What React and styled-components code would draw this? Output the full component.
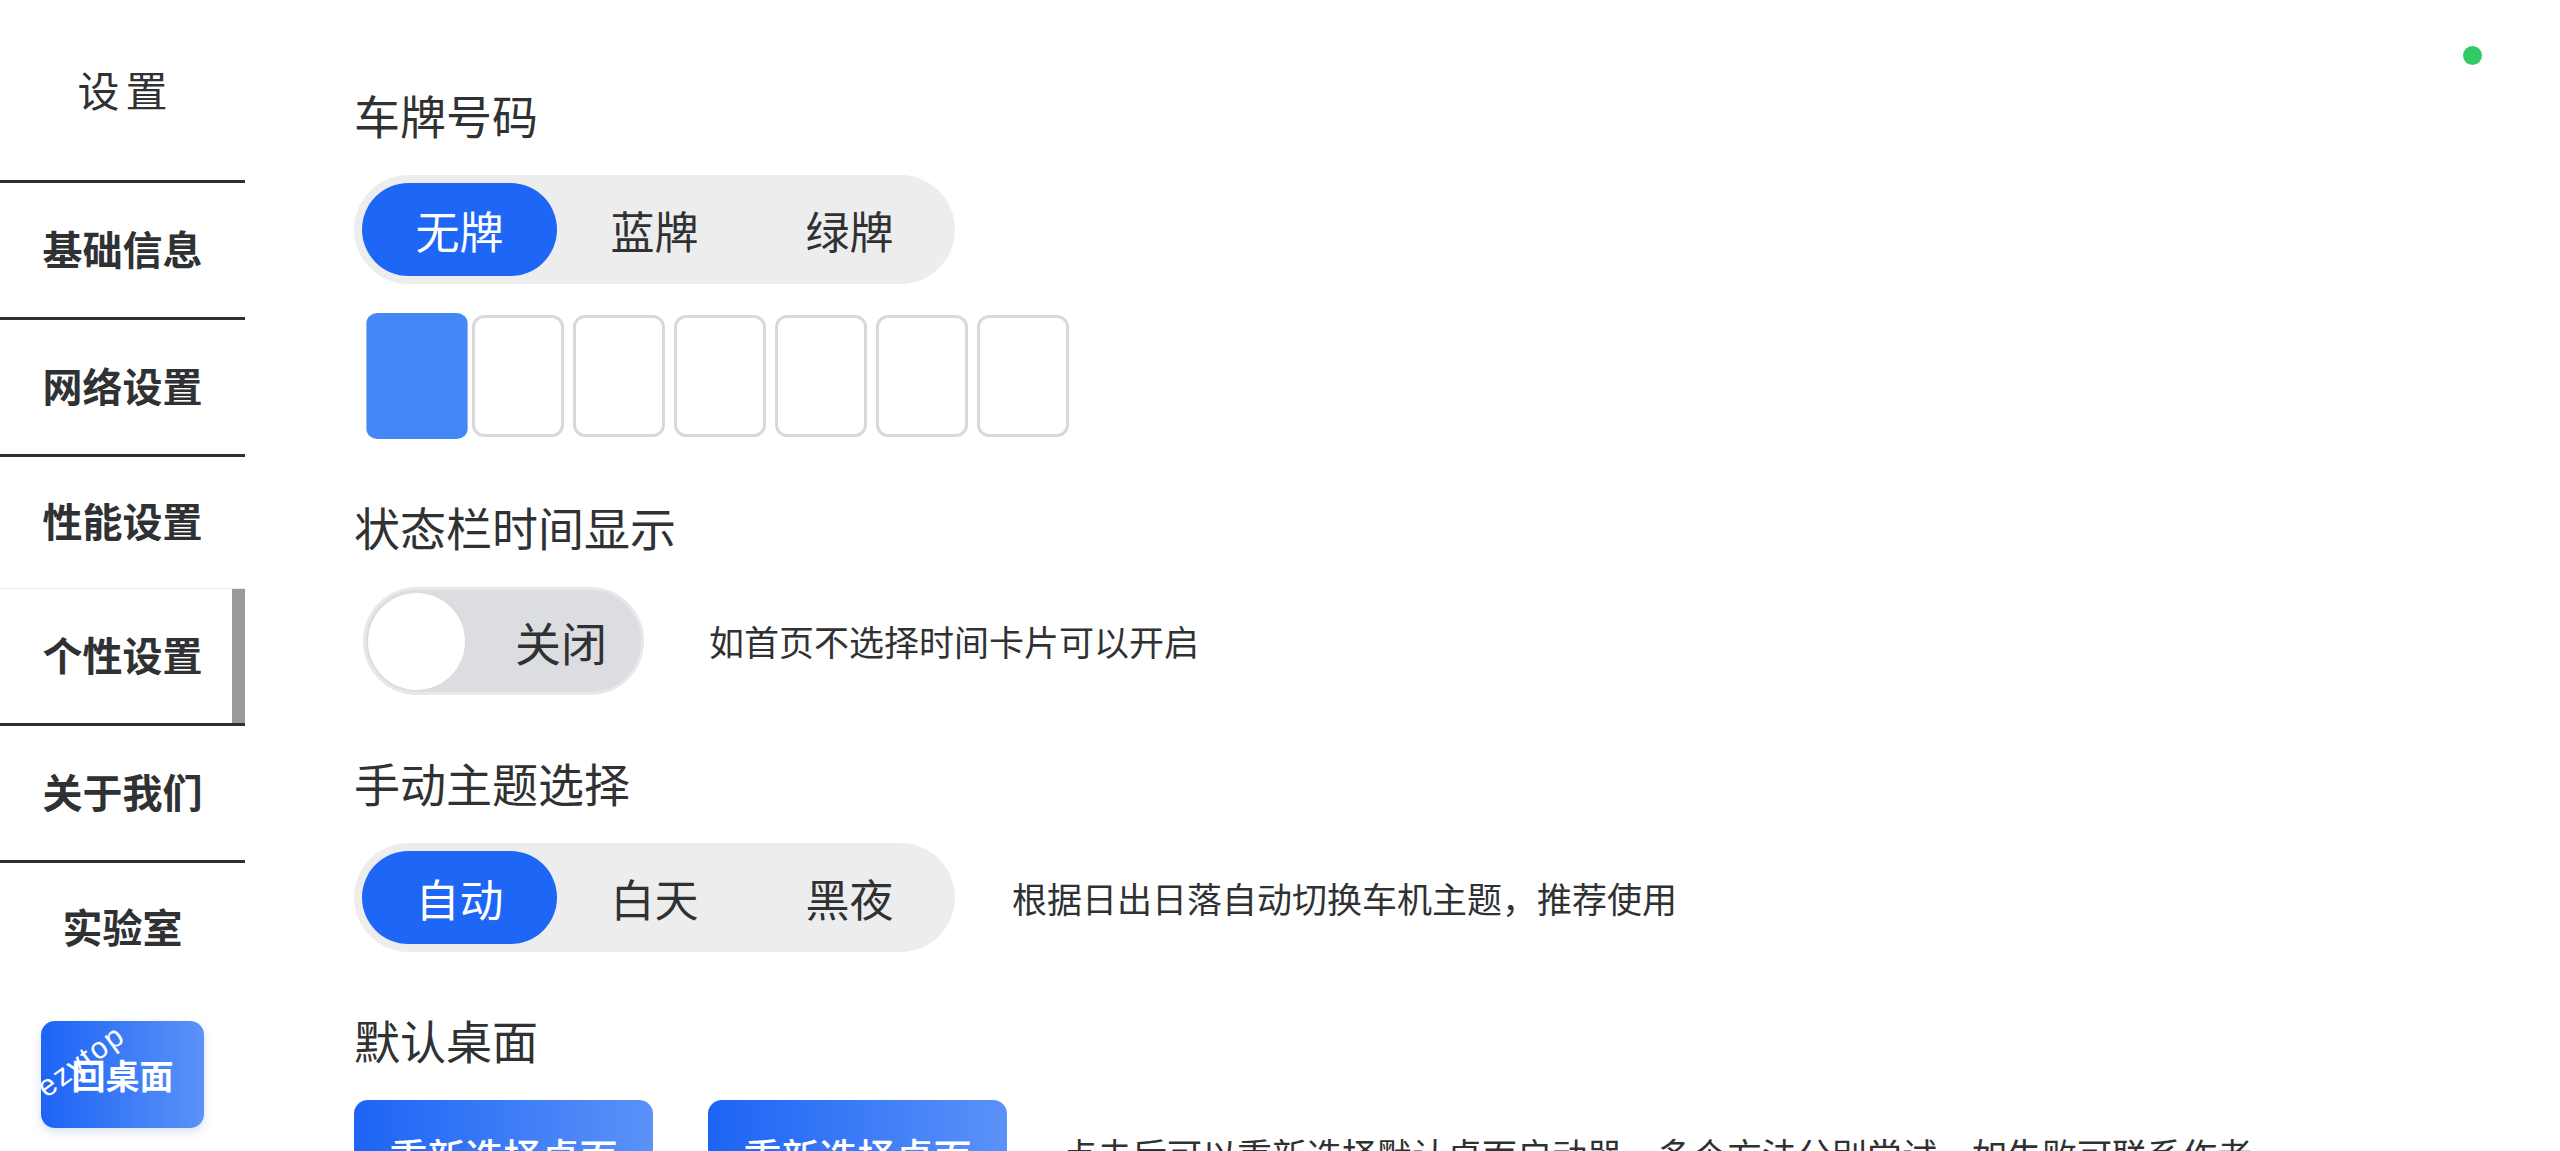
import React from 'react';
import styled, { createGlobalStyle, css } from 'styled-components';

const GlobalStyle = createGlobalStyle`
  html, body {
    margin: 0;
    padding: 0;
    background: #ffffff;
  }
  body {
    font-family: "Noto Sans CJK SC", "Noto Sans", "Liberation Sans", sans-serif;
    color: #303133;
    overflow: hidden;
  }
  * {
    box-sizing: border-box;
  }
`;

const blueGradient = css`
  background: linear-gradient(90deg, #1d64f5 0%, #5a92f8 100%);
`;

const Page = styled.div`
  position: relative;
  display: flex;
  width: 2560px;
  height: 1151px;
  overflow: hidden;
  background: #fff;
`;

const StatusDot = styled.span`
  position: absolute;
  top: 46px;
  right: 78px;
  width: 19px;
  height: 19px;
  border-radius: 50%;
  background: #33c966;
`;

// Sidebar
const Sidebar = styled.nav`
  width: 245px;
  flex-shrink: 0;
  display: flex;
  flex-direction: column;
  align-items: stretch;
`;

const SideTitle = styled.div`
  height: 183px;
  display: flex;
  align-items: center;
  justify-content: center;
  padding-left: 6px;
  padding-bottom: 4px;
  font-size: 42px;
  letter-spacing: 6px;
  color: #303133;
  border-bottom: 3px solid #2f3033;
`;

const NavItem = styled.div`
  height: ${(p) => (p.$divider ? 137 : 131)}px;
  display: flex;
  align-items: center;
  justify-content: center;
  padding-bottom: 5px;
  font-size: 40px;
  font-weight: 700;
  color: #303133;
  border-bottom: ${(p) => (p.$divider ? '3px solid #2f3033' : '0')};

  ${(p) =>
    p.$active &&
    css`
      height: 138px;
      border-top: 1px solid #ececec;
      box-shadow: inset -13px 0 0 #999999;
    `}
`;

const BackButton = styled.div`
  position: relative;
  align-self: center;
  margin-top: 27px;
  width: 163px;
  height: 107px;
  border-radius: 14px;
  ${blueGradient};
  box-shadow: 0 4px 10px rgba(40, 90, 200, 0.18);
  display: flex;
  align-items: center;
  justify-content: center;
  color: #fff;
  font-size: 34px;
  font-weight: 700;
  overflow: hidden;
`;

const Watermark = styled.span`
  position: absolute;
  left: 40px;
  top: 40px;
  transform: translate(-50%, -50%) rotate(-36deg);
  font-family: "Liberation Sans", sans-serif;
  font-size: 30px;
  letter-spacing: 2px;
  font-weight: 400;
  line-height: 1;
  color: #ffffff;
  white-space: nowrap;
`;

// Main content
const Main = styled.main`
  flex: 1;
  display: flex;
  flex-direction: column;
  gap: 63px;
  padding: 90px 0 0 109px;
`;

const Section = styled.section`
  display: flex;
  flex-direction: column;
  align-items: flex-start;
  gap: 29px;
`;

const Title = styled.h2`
  margin: 0;
  height: 56px;
  line-height: 48px;
  font-size: 46px;
  font-weight: 400;
  color: #303133;
`;

const Row = styled.div`
  display: flex;
  align-items: center;
  gap: ${(p) => p.$gap || 57}px;
`;

const Hint = styled.span`
  font-size: 35px;
  line-height: 1.2;
  color: #303133;
  white-space: nowrap;
`;

const SegmentGroup = styled.div`
  display: flex;
  height: 109px;
  padding: 8px;
  border-radius: 55px;
  background: #ededed;
`;

const Segment = styled.div`
  width: 195px;
  height: 93px;
  border-radius: 47px;
  display: flex;
  align-items: center;
  justify-content: center;
  font-size: 44px;
  color: ${(p) => (p.$active ? '#ffffff' : '#303133')};
  background: ${(p) => (p.$active ? '#1e66f6' : 'transparent')};
`;

const PlateRow = styled.div`
  display: flex;
  align-items: center;
  gap: 9px;
  height: 126px;
  padding-left: 17px;
`;

const PlateBox = styled.div`
  width: 92px;
  height: 122px;
  border-radius: 12px;
  border: 3px solid #d9d9d9;
  background: #fff;

  ${(p) =>
    p.$active &&
    css`
      border-color: #4388f6;
      background: #4388f6;
      border-radius: 10px;
      transform: scale(1.1, 1.033);
    `}
`;

const Toggle = styled.div`
  display: flex;
  align-items: center;
  width: 281px;
  height: 108px;
  padding: 0 2px;
  margin-left: 9px;
  border-radius: 54px;
  border: 3px solid #e8e8ea;
  background: #dcdde1;
`;

const Knob = styled.span`
  width: 97px;
  height: 97px;
  border-radius: 50%;
  background: #ffffff;
`;

const ToggleLabel = styled.span`
  margin-left: auto;
  margin-right: 32px;
  font-size: 46px;
  color: #303133;
`;

const ActionButton = styled.div`
  width: 299px;
  height: 108px;
  border-radius: 14px;
  ${blueGradient};
  display: flex;
  align-items: center;
  justify-content: center;
  color: #fff;
  font-size: 38px;
  font-weight: 500;
`;

function Segmented({ options, active }) {
  return (
    <SegmentGroup>
      {options.map((o, i) => (
        <Segment key={o} $active={i === active}>
          {o}
        </Segment>
      ))}
    </SegmentGroup>
  );
}

const navItems = [
  { label: '基础信息', divider: true },
  { label: '网络设置', divider: true },
  { label: '性能设置', divider: false },
  { label: '个性设置', divider: true, active: true },
  { label: '关于我们', divider: true },
  { label: '实验室', divider: false },
];

export default function App() {
  return (
    <>
      <GlobalStyle />
      <Page>
        <Sidebar>
          <SideTitle>设置</SideTitle>
          {navItems.map((n) => (
            <NavItem key={n.label} $divider={n.divider} $active={n.active}>
              {n.label}
            </NavItem>
          ))}
          <BackButton>
            回桌面
            <Watermark>ezytop</Watermark>
          </BackButton>
        </Sidebar>

        <Main>
          <Section>
            <Title>车牌号码</Title>
            <Segmented options={['无牌', '蓝牌', '绿牌']} active={0} />
            <PlateRow>
              {Array.from({ length: 7 }).map((_, i) => (
                <PlateBox key={i} $active={i === 0} />
              ))}
            </PlateRow>
          </Section>

          <Section>
            <Title>状态栏时间显示</Title>
            <Row $gap={65}>
              <Toggle>
                <Knob />
                <ToggleLabel>关闭</ToggleLabel>
              </Toggle>
              <Hint>如首页不选择时间卡片可以开启</Hint>
            </Row>
          </Section>

          <Section>
            <Title>手动主题选择</Title>
            <Row>
              <Segmented options={['自动', '白天', '黑夜']} active={0} />
              <Hint>根据日出日落自动切换车机主题，推荐使用</Hint>
            </Row>
          </Section>

          <Section>
            <Title>默认桌面</Title>
            <Row $gap={55}>
              <ActionButton>重新选择桌面</ActionButton>
              <ActionButton>重新选择桌面</ActionButton>
              <Hint>点击后可以重新选择默认桌面启动器，多个方法分别尝试，如失败可联系作者</Hint>
            </Row>
          </Section>
        </Main>

        <StatusDot />
      </Page>
    </>
  );
}
